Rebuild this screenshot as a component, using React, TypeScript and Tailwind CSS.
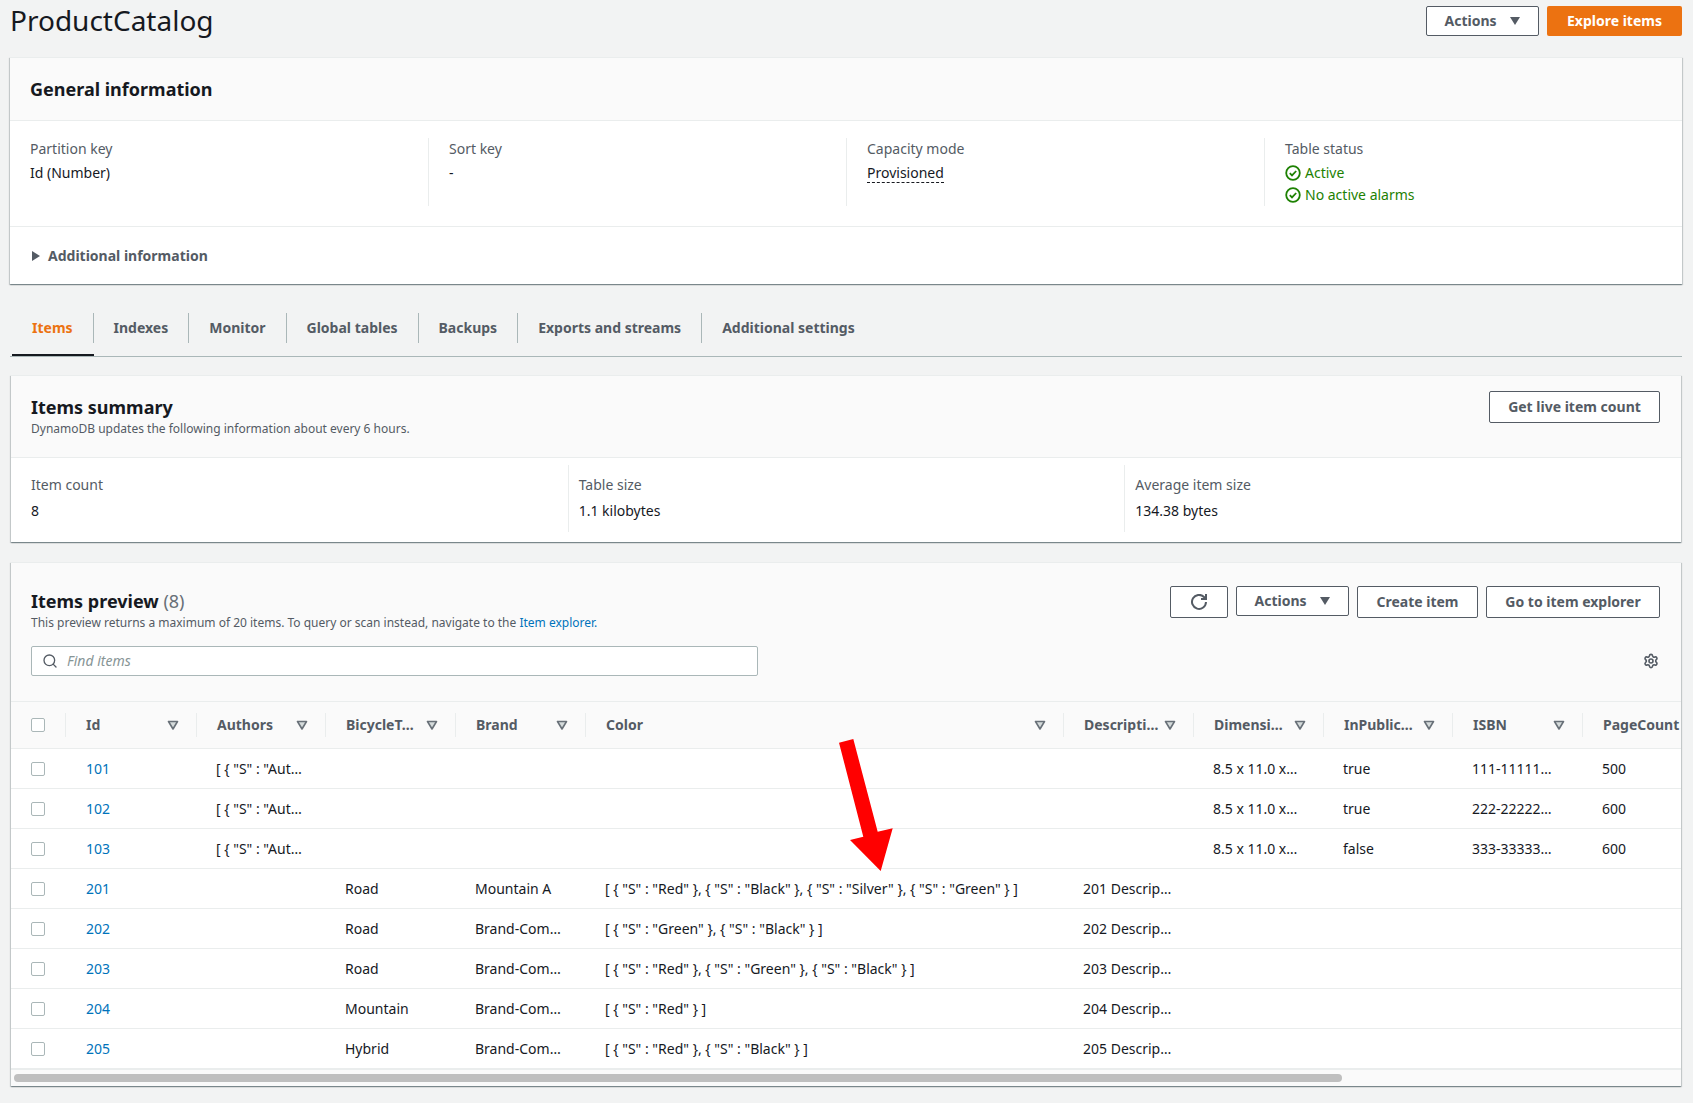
import React from "react";
import { Search, Settings } from "lucide-react";

const cardCls =
  "bg-white border-t border-[#eaeded] shadow-[0_1px_1px_0_rgba(0,28,36,0.3),1px_1px_1px_0_rgba(0,28,36,0.15),-1px_1px_1px_0_rgba(0,28,36,0.15)]";

function Caret() {
  return (
    <svg width="12" height="12" viewBox="0 0 12 12" className="shrink-0">
      <polygon points="1,2 11,2 6,10" fill="#545b64" />
    </svg>
  );
}

function FilterIcon() {
  return (
    <svg width="12" height="12" viewBox="0 0 12 12" className="shrink-0">
      <polygon points="1.5,2.5 10.5,2.5 6,10" fill="#d5dbdb" stroke="#687078" strokeWidth="1.6" strokeLinejoin="round" />
    </svg>
  );
}

function StatusCheck() {
  return (
    <svg width="16" height="16" viewBox="0 0 16 16" className="shrink-0" fill="none" stroke="#1d8102" strokeWidth="1.8">
      <circle cx="8" cy="8" r="6.8" />
      <path d="M4.8 8.2l2.2 2.2 4.2-4.4" />
    </svg>
  );
}

function Btn({ children, className = "" }: { children: React.ReactNode; className?: string }) {
  return (
    <button
      className={
        "flex items-center justify-center border border-[#545b64] rounded-[2px] bg-white text-[#545b64] text-sm font-bold " +
        className
      }
    >
      {children}
    </button>
  );
}

function Field({ label, children, first }: { label: string; children: React.ReactNode; first?: boolean }) {
  return (
    <div className={first ? "pl-5" : "pl-5 border-l border-[#eaeded]"}>
      <div className="text-sm leading-[22px] text-[#545b64]">{label}</div>
      <div className="mt-[2px] text-sm leading-[22px] text-[#16191f]">{children}</div>
    </div>
  );
}

const tabs = ["Items", "Indexes", "Monitor", "Global tables", "Backups", "Exports and streams", "Additional settings"];

const columns: { label: string; w: string; pl: string }[] = [
  { label: "Id", w: "w-[131px]", pl: "pl-[20px]" },
  { label: "Authors", w: "w-[129px]", pl: "pl-[20px]" },
  { label: "BicycleT…", w: "w-[130px]", pl: "pl-[20px]" },
  { label: "Brand", w: "w-[130px]", pl: "pl-[20px]" },
  { label: "Color", w: "w-[478px]", pl: "pl-[20px]" },
  { label: "Descripti…", w: "w-[130px]", pl: "pl-[20px]" },
  { label: "Dimensi…", w: "w-[130px]", pl: "pl-[20px]" },
  { label: "InPublic…", w: "w-[129px]", pl: "pl-[20px]" },
  { label: "ISBN", w: "w-[130px]", pl: "pl-[20px]" },
  { label: "PageCount", w: "w-[100px]", pl: "pl-[20px]" },
];

const author = '[ { "S" : "Aut…';
const dim = "8.5 x 11.0 x…";

const rows: string[][] = [
  ["101", author, "", "", "", "", dim, "true", "111-11111…", "500"],
  ["102", author, "", "", "", "", dim, "true", "222-22222…", "600"],
  ["103", author, "", "", "", "", dim, "false", "333-33333…", "600"],
  ["201", "", "Road", "Mountain A", '[ { "S" : "Red" }, { "S" : "Black" }, { "S" : "Silver" }, { "S" : "Green" } ]', "201 Descrip…", "", "", "", ""],
  ["202", "", "Road", "Brand-Com…", '[ { "S" : "Green" }, { "S" : "Black" } ]', "202 Descrip…", "", "", "", ""],
  ["203", "", "Road", "Brand-Com…", '[ { "S" : "Red" }, { "S" : "Green" }, { "S" : "Black" } ]', "203 Descrip…", "", "", "", ""],
  ["204", "", "Mountain", "Brand-Com…", '[ { "S" : "Red" } ]', "204 Descrip…", "", "", "", ""],
  ["205", "", "Hybrid", "Brand-Com…", '[ { "S" : "Red" }, { "S" : "Black" } ]', "205 Descrip…", "", "", "", ""],
];

function Checkbox() {
  return <div className="w-[14px] h-[14px] rounded-[2px] border border-[#aab7b8] bg-white" />;
}

export default function App() {
  return (
    <div className="w-full h-[1103px] overflow-hidden relative bg-[#f2f3f3] font-['Noto_Sans',sans-serif] text-[#16191f] pl-[10px] pr-[11px]">
      {/* Title row */}
      <div className="flex items-start justify-between h-[57px]">
        <h1 className="text-[28px] leading-[40px] font-normal">ProductCatalog</h1>
        <div className="flex gap-2 pt-[6px]">
          <Btn className="w-[113px] h-[30px] gap-3 bg-white">
            <span>Actions</span>
            <Caret />
          </Btn>
          <button className="w-[135px] h-[30px] rounded-[2px] bg-[#ec7211] text-white text-sm font-bold">Explore items</button>
        </div>
      </div>

      {/* General information */}
      <section className={cardCls}>
        <div className="h-[63px] bg-[#fafafa] border-b border-[#eaeded] flex items-center pl-5">
          <h2 className="text-lg font-bold leading-[24px]">General information</h2>
        </div>
        <div className="h-[106px] border-b border-[#eaeded] pt-[17px]">
          <div className="grid grid-cols-4 h-[68px]">
            <Field label="Partition key" first>Id (Number)</Field>
            <Field label="Sort key">-</Field>
            <Field label="Capacity mode">
              <span className="border-b border-dashed border-[#16191f]">Provisioned</span>
            </Field>
            <Field label="Table status">
              <div className="flex flex-col text-[#1d8102]">
                <span className="flex items-center gap-[4px]"><StatusCheck />Active</span>
                <span className="flex items-center gap-[4px]"><StatusCheck />No active alarms</span>
              </div>
            </Field>
          </div>
        </div>
        <div className="h-[57px] flex items-center pl-[22px] gap-[8px]">
          <svg width="8" height="12" viewBox="0 0 8 12"><polygon points="0,1 8,6 0,11" fill="#545b64" /></svg>
          <span className="text-sm font-bold text-[#545b64]">Additional information</span>
        </div>
      </section>

      {/* Tabs */}
      <div className="flex items-end h-[73px] border-b border-[#aab7b8] pl-[2px]">
        {tabs.map((t, i) => (
          <div key={t} className={i === 0 ? "border-b-2 border-[#16191f] pb-[11px]" : "border-b-2 border-transparent pb-[11px]"}>
            <div
              className={
                "h-[30px] flex items-center px-5 text-sm font-bold " +
                (i === 0 ? "text-[#ec7211] " : "text-[#545b64] ") +
                (i < tabs.length - 1 ? "border-r border-[#aab7b8]" : "")
              }
            >
              {t}
            </div>
          </div>
        ))}
      </div>

      {/* Items summary */}
      <section className={cardCls + " mt-[18px] mx-[1px]"}>
        <div className="h-[82px] bg-[#fafafa] border-b border-[#eaeded] flex items-start justify-between pl-5 pr-[21px]">
          <div className="pt-[19px]">
            <h2 className="text-lg font-bold leading-[24px]">Items summary</h2>
            <p className="text-xs leading-[18px] text-[#545b64] mt-[1px]">DynamoDB updates the following information about every 6 hours.</p>
          </div>
          <div className="pt-[15px]">
            <Btn className="w-[171px] h-[32px]">Get live item count</Btn>
          </div>
        </div>
        <div className="h-[84px] pt-[7px]">
          <div className="grid grid-cols-3 h-[67px]">
            <div className="pl-5 pt-[9px]">
              <div className="text-sm leading-[22px] text-[#545b64]">Item count</div>
              <div className="text-sm leading-[22px] mt-[4px]">8</div>
            </div>
            <div className="pl-[10px] pt-[9px] border-l border-[#eaeded]">
              <div className="text-sm leading-[22px] text-[#545b64]">Table size</div>
              <div className="text-sm leading-[22px] mt-[4px]">1.1 kilobytes</div>
            </div>
            <div className="pl-[10px] pt-[9px] border-l border-[#eaeded]">
              <div className="text-sm leading-[22px] text-[#545b64]">Average item size</div>
              <div className="text-sm leading-[22px] mt-[4px]">134.38 bytes</div>
            </div>
          </div>
        </div>
      </section>

      {/* Items preview */}
      <section className={cardCls + " mt-[20px] mx-[1px] overflow-hidden"}>
        <div className="h-[138px] bg-[#fafafa] pl-5 pr-[21px] pt-[23px]">
          <div className="flex items-start justify-between">
            <div className="pt-[3px]">
              <h2 className="text-lg font-bold leading-[24px]">
                Items preview <span className="font-normal text-[#687078]">(8)</span>
              </h2>
              <p className="text-xs leading-[18px] text-[#545b64] mt-[1px]">
                This preview returns a maximum of 20 items. To query or scan instead, navigate to the{" "}
                <span className="text-[#0073bb]">Item explorer.</span>
              </p>
            </div>
            <div className="flex items-start gap-2">
              <Btn className="w-[58px] h-[32px]">
                <svg width="16" height="16" viewBox="0 0 16 16" fill="none" stroke="#545b64" strokeWidth="2">
                  <path d="M10 5h5V0" />
                  <path d="M15 8a6.99 6.99 0 1 1-2-5l2 2" />
                </svg>
              </Btn>
              <Btn className="w-[113px] h-[30px] gap-3">
                <span>Actions</span>
                <Caret />
              </Btn>
              <Btn className="w-[121px] h-[32px]">Create item</Btn>
              <Btn className="w-[174px] h-[32px]">Go to item explorer</Btn>
            </div>
          </div>
          <div className="flex items-center justify-between mt-[14px]">
            <div className="w-[727px] h-[30px] border border-[#aab7b8] rounded-[2px] bg-white flex items-center pl-[10px] gap-[9px]">
              <Search size={16} color="#545b64" strokeWidth={2} />
              <span className="text-sm italic text-[#879596]">Find items</span>
            </div>
            <Settings size={16} color="#545b64" strokeWidth={2.4} className="mr-[1px]" />
          </div>
        </div>

        <div className="h-[48px] bg-[#fafafa] border-y border-[#eaeded] flex items-center overflow-hidden">
          <div className="w-[54px] shrink-0 pl-5 flex items-center"><Checkbox /></div>
          {columns.map((c, i) => (
            <div key={c.label} className={"shrink-0 h-[24px] border-l border-[#eaeded] flex items-center justify-between pr-[17px] text-sm font-bold text-[#545b64] " + c.w + " " + c.pl}>
              <span className="whitespace-nowrap">{c.label}</span>
              {i < columns.length - 1 && i !== 4 ? <FilterIcon /> : i === 4 ? <FilterIcon /> : null}
            </div>
          ))}
        </div>

        {rows.map((r) => (
          <div key={r[0]} className="h-[40px] bg-white border-b border-[#eaeded] flex items-center overflow-hidden">
            <div className="w-[54px] shrink-0 pl-5 flex items-center"><Checkbox /></div>
            {r.map((cell, i) => (
              <div key={i} className={"shrink-0 text-sm whitespace-nowrap " + columns[i].w + " " + (i === 0 ? "pl-[21px] text-[#0073bb]" : "pl-[20px]")}>
                {cell}
              </div>
            ))}
          </div>
        ))}

        <div className="h-[17px] bg-[#fafafa] border-t border-[#eaeded] flex items-center pl-[3px]">
          <div className="w-[1328px] h-[8px] rounded-[4px] bg-[#bfbfbf]" />
        </div>
      </section>

      {/* Red annotation arrow lies over the table */}
      <svg className="absolute left-0 top-0 pointer-events-none" width="1693" height="1103" viewBox="0 0 1693 1103">
        <polygon points="839,742.7 853.3,739 877.7,831.7 892.7,828.3 880.7,871 850,840 863.3,836.7" fill="#ff0000" />
      </svg>
    </div>
  );
}
